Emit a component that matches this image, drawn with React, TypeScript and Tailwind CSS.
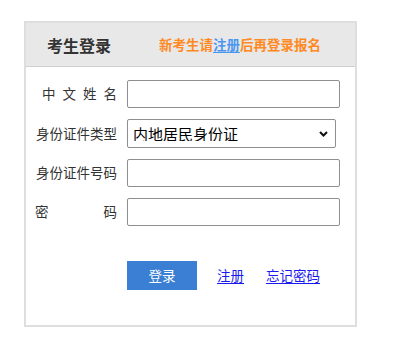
import React from 'react';

const font = { fontFamily: '"Noto Sans CJK SC", "Noto Sans", sans-serif' };

function Spread({ chars, className }: { chars: string[]; className: string }) {
  return (
    <div className={`flex justify-between ${className}`}>
      {chars.map((c, i) => (
        <span key={i}>{c}</span>
      ))}
    </div>
  );
}

export default function App() {
  const inputCls =
    'h-[28px] w-[213px] border border-[#8f8f8f] rounded-[2px] bg-white outline-none px-2 text-[14px]';

  return (
    <div className="min-h-screen bg-white pt-[21px] pl-[24px] font-['Noto_Sans_CJK_SC',sans-serif]">
      <div className="w-[333px] border-2 border-[#dedede] bg-white">
        <div className="h-[44px] bg-[#e8e8e8] border-b border-[#cfcfcf] flex items-center pl-[21px]">
          <div className="text-[16px] font-bold text-[#333] leading-none w-[112px]">考生登录</div>
          <div className="text-[13.5px] font-bold text-[#ff8a24] leading-none whitespace-nowrap">
            新考生请<span className="text-[#4b97f0] underline underline-offset-2">注册</span>后再登录报名
          </div>
        </div>

        <div className="pt-[13px] pb-[35px] flex flex-col gap-[11px] text-[13.5px] text-[#333] leading-none">
          <div className="flex items-center">
            <div className="w-[91px] flex justify-end">
              <Spread chars={['中', '文', '姓', '名']} className="w-[75px]" />
            </div>
            <input className={`${inputCls} ml-[10px]`} />
          </div>

          <div className="flex items-center">
            <div className="w-[91px] text-right">身份证件类型</div>
            <div className="relative ml-[10px] w-[209px]">
              <select
                className="h-[29px] w-[209px] appearance-none border border-[#8f8f8f] rounded-[2px] bg-white pl-[5px] text-[15px] text-black outline-none"
                style={font}
                defaultValue="内地居民身份证"
              >
                <option>内地居民身份证</option>
              </select>
              <svg
                className="absolute right-[8px] top-[12px] pointer-events-none"
                width="9"
                height="6"
                viewBox="0 0 9 6"
              >
                <path d="M1 1 L4.5 4.5 L8 1" fill="none" stroke="#111" strokeWidth="2" />
              </svg>
            </div>
          </div>

          <div className="flex items-center">
            <div className="w-[91px] text-right">身份证件号码</div>
            <input className={`${inputCls} ml-[10px]`} />
          </div>

          <div className="flex items-center">
            <div className="w-[91px] flex justify-end">
              <Spread chars={['密', '码']} className="w-[82px]" />
            </div>
            <input type="password" className={`${inputCls} ml-[10px]`} />
          </div>

          <div className="flex items-center mt-[24px] pl-[101px]">
            <button className="h-[29px] w-[70px] bg-[#3a7fd3] text-white text-[13.5px] leading-none">
              登录
            </button>
            <a href="#" className="ml-[20px] text-[#1a1aee] underline underline-offset-2">
              注册
            </a>
            <a href="#" className="ml-[22px] text-[#1a1aee] underline underline-offset-2">
              忘记密码
            </a>
          </div>
        </div>
      </div>
    </div>
  );
}
